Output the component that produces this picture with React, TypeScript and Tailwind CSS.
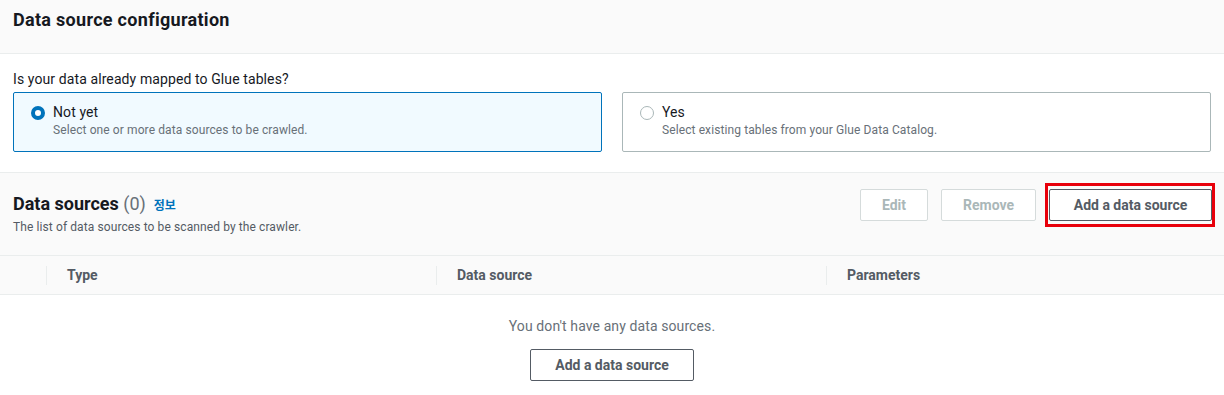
import React from "react";

const font = "font-['Roboto','Noto_Sans_CJK_KR',sans-serif]";

const RadioCard = ({
  checked,
  title,
  description,
}: {
  checked: boolean;
  title: string;
  description: string;
}) => (
  <div
    className={`w-[590px] h-[60px] border rounded-[2px] pl-[17px] pt-[9px] flex gap-[8px] ${
      checked ? "bg-[#f1faff] border-[#0073bb]" : "bg-white border-[#aab7b8]"
    }`}
  >
    <div className="pt-[4px]">
      {checked ? (
        <div className="w-[14px] h-[14px] rounded-full border-[4px] border-[#0073bb] bg-white" />
      ) : (
        <div className="w-[14px] h-[14px] rounded-full border-[1.5px] border-[#aab7b8] bg-white" />
      )}
    </div>
    <div className="flex flex-col">
      <span className="text-[14px] leading-[20px] text-[#16191f] tracking-[0.1px]">{title}</span>
      <span className="text-[12px] leading-[16px] text-[#687078] tracking-[0.1px]">{description}</span>
    </div>
  </div>
);

export default function App() {
  const columns = ["Type", "Data source", "Parameters"];
  return (
    <div className={`w-[1224px] h-[395px] bg-white ${font}`}>
      <div className="h-[54px] bg-[#fafafa] border-b border-[#eaeded] px-[13px] flex items-center">
        <h2 className="text-[18px] font-bold text-[#16191f] leading-[22px] -mt-[14px] tracking-[0.3px]">
          Data source configuration
        </h2>
      </div>

      <div className="px-[13px] pt-[15px] pb-[20px]">
        <div className="text-[14px] leading-[20px] text-[#16191f] mb-[3px] tracking-[0.1px]">
          Is your data already mapped to Glue tables?
        </div>
        <div className="flex gap-[20px]">
          <RadioCard
            checked
            title="Not yet"
            description="Select one or more data sources to be crawled."
          />
          <RadioCard
            checked={false}
            title="Yes"
            description="Select existing tables from your Glue Data Catalog."
          />
        </div>
      </div>

      <div className="bg-[#fafafa] border-t border-[#eaeded]">
        <div className="h-[83px] pl-[13px] pr-[9px] flex justify-between border-b border-[#eaeded]">
          <div className="pt-[20px]">
            <div className="flex items-baseline gap-[8px]">
              <span className="text-[18px] font-bold leading-[22px] text-[#16191f]">
                Data sources{" "}
                <span className="font-normal text-[#687078]">(0)</span>
              </span>
              <span className="text-[12px] font-bold text-[#0073bb]">정보</span>
            </div>
            <div className="text-[12px] leading-[16px] text-[#545b64] mt-[4px] tracking-[0.1px]">
              The list of data sources to be scanned by the crawler.
            </div>
          </div>
          <div className="flex items-start pt-[10px] gap-[13px]">
            <button className="mt-[6px] h-[32px] w-[68px] border border-[#d5dbdb] rounded-[2px] bg-white text-[14px] font-bold text-[#aab7b8]">
              Edit
            </button>
            <button className="mt-[6px] h-[32px] w-[95px] border border-[#d5dbdb] rounded-[2px] bg-white text-[14px] font-bold text-[#aab7b8] -mr-[4px]">
              Remove
            </button>
            <div className="border-[3px] border-[#e8000b] pl-[1px] pr-[0px] py-[3px]">
              <button className="h-[32px] w-[163px] border border-[#545b64] rounded-[2px] bg-white text-[14px] font-bold text-[#545b64]">
                Add a data source
              </button>
            </div>
          </div>
        </div>

        <div className="h-[39px] flex items-center border-b border-[#eaeded]">
          <div className="w-[46px]" />
          {columns.map((c, i) => (
            <div
              key={c}
              className={`${i === 2 ? "flex-1" : "w-[390px]"} h-[19px] border-l border-[#eaeded] pl-[20px] flex items-center text-[14px] font-bold text-[#545b64]`}
            >
              {c}
            </div>
          ))}
        </div>
      </div>

      <div className="flex flex-col items-center pt-[21px]">
        <div className="text-[14px] leading-[20px] text-[#687078] tracking-[0.1px]">
          You don't have any data sources.
        </div>
        <button className="mt-[13px] h-[32px] w-[164px] border border-[#545b64] rounded-[2px] bg-white text-[14px] font-bold text-[#545b64]">
          Add a data source
        </button>
      </div>
    </div>
  );
}
